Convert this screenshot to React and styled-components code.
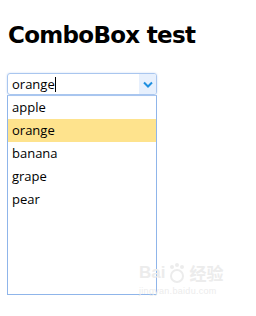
import React from 'react';
import styled, { createGlobalStyle } from 'styled-components';

const GlobalStyle = createGlobalStyle`
  html, body {
    margin: 0;
    padding: 0;
    background: #fff;
  }
  body {
    font-family: "Open Sans", "Noto Sans", sans-serif;
    color: #000;
  }
`;

const Page = styled.div`
  position: relative;
  width: 256px;
  height: 316px;
  padding: 22px 0 0 8px;
  box-sizing: border-box;
  overflow: hidden;
`;

const Title = styled.h1`
  margin: 0 0 24px 0;
  font-family: "DejaVu Sans", sans-serif;
  font-weight: bold;
  font-size: 23px;
  line-height: 27px;
  letter-spacing: -0.7px;
`;

const Combo = styled.div`
  width: 150px;
  margin-left: -1px;
`;

const InputBox = styled.div`
  display: flex;
  height: 22px;
  border: 1px solid #a9c6ef;
  border-radius: 3px;
  box-sizing: border-box;
  box-shadow: 0 0 2px rgba(120, 160, 230, 0.4);
  overflow: hidden;
`;

const InputText = styled.div`
  flex: 1;
  padding-left: 4px;
  font-size: 13px;
  line-height: 20px;
`;

const Caret = styled.span`
  display: inline-block;
  width: 1px;
  height: 15px;
  background: #000;
  vertical-align: -3px;
`;

const Arrow = styled.div`
  width: 17px;
  background: #e7f0fd;
  display: flex;
  align-items: center;
  justify-content: center;
`;

const List = styled.ul`
  list-style: none;
  margin: 0;
  padding: 0;
  height: 200px;
  border: 1px solid #8fb5ea;
  border-top-color: #a9c6ef;
  box-sizing: border-box;
`;

const Item = styled.li`
  height: 23px;
  padding-left: 4px;
  font-size: 13px;
  line-height: 23px;
  background: ${p => (p.$active ? '#fee38d' : 'transparent')};
`;

const Watermark = styled.div`
  position: absolute;
  left: 139px;
  top: 262px;
  color: #ececec;
  font-family: "Liberation Sans", sans-serif;
  font-weight: bold;
  pointer-events: none;
`;

const MarkTop = styled.div`
  font-size: 17px;
  line-height: 20px;
  display: flex;
  align-items: center;
  gap: 1px;
`;

const MarkBottom = styled.div`
  font-size: 9px;
  line-height: 10px;
  font-weight: normal;
  margin-top: 2px;
  letter-spacing: 0.3px;
`;

const fruits = ['apple', 'orange', 'banana', 'grape', 'pear'];

const App = () => (
  <Page>
    <GlobalStyle />
    <Title>ComboBox test</Title>
    <Combo>
      <InputBox>
        <InputText>orange<Caret /></InputText>
        <Arrow>
          <svg width="10" height="7" viewBox="0 0 10 7">
            <path d="M1 1.5 L5 5.5 L9 1.5" fill="none" stroke="#1f8fe0" strokeWidth="2" />
          </svg>
        </Arrow>
      </InputBox>
      <List>
        {fruits.map(f => (
          <Item key={f} $active={f === 'orange'}>{f}</Item>
        ))}
      </List>
    </Combo>
    <Watermark>
      <MarkTop>
        <span>Bai</span>
        <svg width="22" height="22" viewBox="0 0 22 22">
          <circle cx="11" cy="14" r="6" fill="none" stroke="#ececec" strokeWidth="2" />
          <circle cx="6" cy="5" r="2" fill="#ececec" />
          <circle cx="11" cy="3" r="2" fill="#ececec" />
          <circle cx="16" cy="5" r="2" fill="#ececec" />
        </svg>
        <span style={{ fontFamily: '"Noto Sans CJK SC", sans-serif' }}>经验</span>
      </MarkTop>
      <MarkBottom>jingyan.baidu.com</MarkBottom>
    </Watermark>
  </Page>
);

export default App;
